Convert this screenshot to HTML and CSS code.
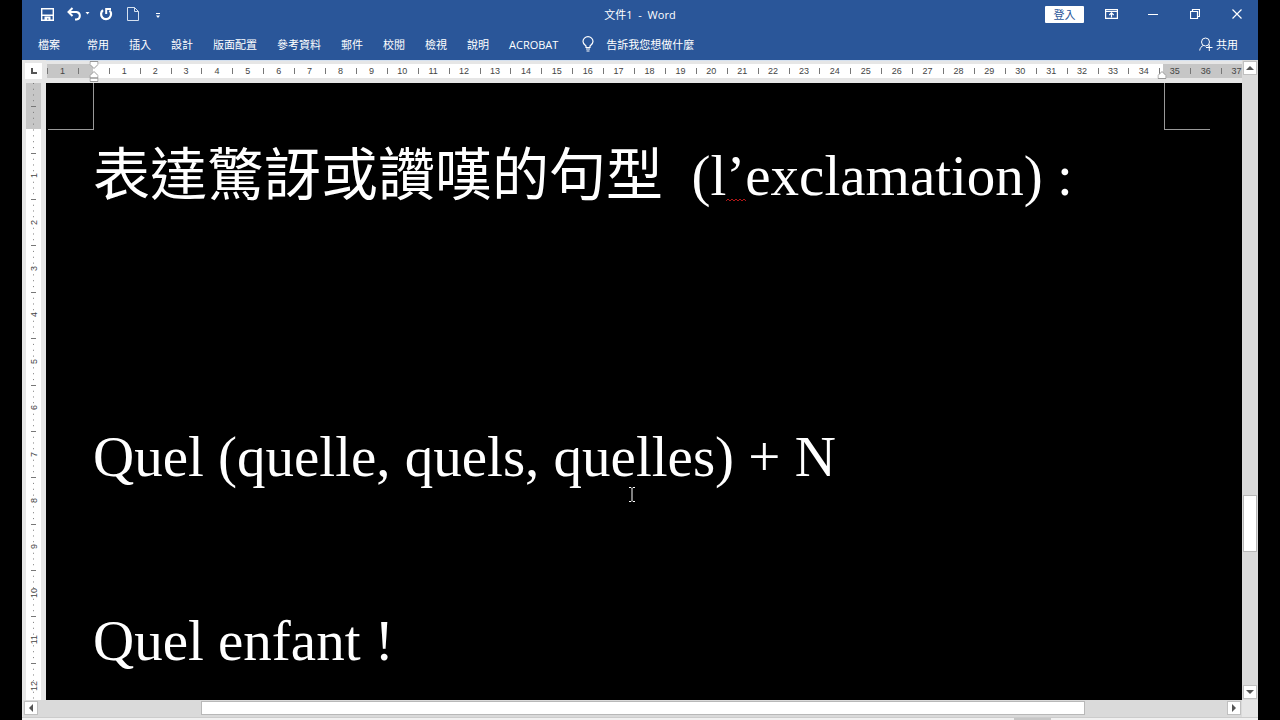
FILE: index.html
```html
<!DOCTYPE html>
<html lang="zh-Hant">
<head>
  <meta charset="UTF-8" />
  <meta name="viewport" content="width=device-width, initial-scale=1" />
  <title>文件1 - Word</title>
  <link rel="stylesheet" href="styles.css">
</head>
<body>
  <div class="app">
    <header class="titlebar">
      <div class="quick-access">
        <button aria-label="儲存">
          <svg width="13" height="13" viewBox="0 0 13 13"><path d="M.7.700h11.600v11.600H.700z" fill="none" stroke="currentColor" stroke-width="1.400"/><path d="M1 6.500h11V8H1zM3.500 8.500h6v4h-2v-2h-1.500v2H3.500z" fill="currentColor"/></svg>
        </button>
        <button class="undo" aria-label="復原">
          <svg width="24" height="14" viewBox="0 0 24 14"><path d="M2 5h7.500a4 3.800 0 0 1 0 7.500H8M5.500 1L1.500 5l4 4" fill="none" stroke="currentColor" stroke-width="2"/><path d="M18.500 5h4l-2 2.500z" fill="currentColor"/></svg>
        </button>
        <button class="redo" aria-label="重複">
          <svg width="14" height="14" viewBox="0 0 14 14"><path d="M4 3.200A5 5 0 1 0 10.500 3.500" fill="none" stroke="currentColor" stroke-width="2.200"/><path d="M7.200 7V2H12" fill="none" stroke="currentColor" stroke-width="2"/></svg>
        </button>
        <button class="new" aria-label="新增">
          <svg width="12" height="14" viewBox="0 0 12 14"><path d="M.5.500h7l4 4v9H.500zM7.500.500v4h4" fill="none" stroke="#d5e1f0"/></svg>
        </button>
        <button class="more" aria-label="自訂快速存取工具列">
          <svg width="6" height="6" viewBox="0 0 6 6"><path d="M1 .5h4" stroke="currentColor"/><path d="M1 2.500h4L3 5z" fill="currentColor"/></svg>
        </button>
      </div>
      <h1>文件1&nbsp; -&nbsp; Word</h1>
      <div class="window-buttons">
        <button class="sign-in">登入</button>
        <button aria-label="功能區顯示選項">
          <svg width="13" height="10" viewBox="0 0 13 10"><path d="M.6.600h11.800v8.800H.600zM.6 2.500h11.800" fill="none" stroke="currentColor" stroke-width="1.200"/><path d="M6.500 8.500V4M4.300 6l2.200-2.200L8.700 6" fill="none" stroke="currentColor" stroke-width="1.200"/></svg>
        </button>
        <button aria-label="最小化">
          <svg width="10" height="10" viewBox="0 0 10 10"><path d="M0 5.500h10" stroke="currentColor"/></svg>
        </button>
        <button aria-label="還原">
          <svg width="10" height="10" viewBox="0 0 10 10"><path d="M.5 2.500h7v7h-7zM2.500 2.500v-2h7v7h-2" fill="none" stroke="currentColor" stroke-width="1.200"/></svg>
        </button>
        <button aria-label="關閉">
          <svg width="10" height="10" viewBox="0 0 10 10"><path d="M.5.500l9 9M9.500.500l-9 9" stroke="currentColor" stroke-width="1.200"/></svg>
        </button>
      </div>
    </header>

    <nav class="tabs">
      <a class="file" href="#file">檔案</a>
      <a href="#home">常用</a>
      <a href="#insert">插入</a>
      <a href="#design">設計</a>
      <a href="#layout">版面配置</a>
      <a href="#references">參考資料</a>
      <a href="#mailings">郵件</a>
      <a href="#review">校閱</a>
      <a href="#view">檢視</a>
      <a href="#help">說明</a>
      <a class="acrobat" href="#acrobat">ACROBAT</a>
      <button class="tell-me">
        <svg width="12" height="16" viewBox="0 0 12 16"><path d="M4 11.500V10C2.500 8.500 1 7.500 1 5.500a5 4.800 0 0 1 10 0C11 7.500 9.500 8.500 8 10v1.500zM4 13h4M4.500 15h3" fill="none" stroke="currentColor" stroke-width="1.200"/></svg>
        告訴我您想做什麼
      </button>
      <button class="share">
        <svg width="14" height="14" viewBox="0 0 14 14"><circle cx="6.500" cy="5" r="4" fill="none" stroke="currentColor"/><path d="M.7 13.500C1 11 2.500 9 4.500 8.500M8.500 8.500l1 .8M7 10.500h6.500M10.300 7.500v6.500" fill="none" stroke="currentColor"/></svg>
        共用
      </button>
    </nav>

    <main class="workspace">
      <div class="tab-stop">
        <button aria-label="定位停駐點"><svg width="6" height="6" viewBox="0 0 6 6"><path d="M1 0v5h5" fill="none" stroke="currentColor" stroke-width="2"/></svg></button>
      </div>

      <div class="h-ruler">
        <div class="h-scale" id="hScale">
          <svg class="indent" width="9" height="21" viewBox="0 0 9 21"><path d="M.5.500h8v3l-4 4-4-4zM.5 17v-2.500l4-4 4 4V17zM.5 17h8v3.500h-8z" fill="#fff" stroke="#999"/></svg>
          <svg class="indent-right" width="9" height="8" viewBox="0 0 9 8"><path d="M.5 7.500v-3l4-4 4 4v3z" fill="#fff" stroke="#999"/></svg>
        </div>
      </div>

      <div class="v-ruler">
        <div class="v-scale" id="vScale"></div>
      </div>

      <article class="document">
        <div class="margins">
          <span class="corner"></span>
          <span class="corner corner-right"></span>
        </div>
        <div class="text">
          <p class="heading">表達驚訝或讚嘆的句型&nbsp; (l<span class="typo">’<svg class="squiggle" width="21" height="4" viewBox="0 0 21 4"><path d="M0 3l2-2 2 2 2-2 2 2 2-2 2 2 2-2 2 2 2-2 2 2" fill="none" stroke="#b01818"/></svg></span>exclamation) :</p>
          <p><br></p>
          <p><br></p>
          <p>Quel (quelle, quels, quelles) + N</p>
          <p><br></p>
          <p>Quel enfant !</p>
        </div>
        <svg class="cursor" width="7" height="15" viewBox="0 0 7 15"><path d="M.5.500h2l1 1 1-1h2M3.500 1.500v12M.5 14.500h2l1-1 1 1h2" fill="none" stroke="#fff"/></svg>
      </article>

      <div class="v-scroll">
        <button aria-label="向上捲動"><svg width="8" height="4" viewBox="0 0 8 4"><path d="M0 4l4-4 4 4z" fill="currentColor"/></svg></button>
        <div class="track">
          <span class="before"></span>
          <span class="thumb"></span>
          <span class="after"></span>
        </div>
        <button aria-label="向下捲動"><svg width="8" height="4" viewBox="0 0 8 4"><path d="M0 0l4 4 4-4z" fill="currentColor"/></svg></button>
      </div>

      <div class="h-scroll">
        <button aria-label="向左捲動"><svg width="4" height="8" viewBox="0 0 4 8"><path d="M4 0L0 4l4 4z" fill="currentColor"/></svg></button>
        <div class="track">
          <span class="before"></span>
          <span class="thumb"></span>
          <span class="after"></span>
        </div>
        <button aria-label="向右捲動"><svg width="4" height="8" viewBox="0 0 4 8"><path d="M0 0l4 4-4 4z" fill="currentColor"/></svg></button>
      </div>
    </main>

    <footer class="statusbar"><span class="active-view"></span></footer>
  </div>

  <script>
    // unlabeled: positions on the scale that get ticks but no number
    function buildScale(id, from, to, unlabeled) {
      const scale = document.getElementById(id);
      for (let n = from; n <= to; n++) {
        const cell = document.createElement('span');
        cell.className = 'unit';
        if (!unlabeled.includes(n)) {
          const label = document.createElement('b');
          label.textContent = Math.abs(n);
          cell.appendChild(label);
        }
        scale.appendChild(cell);
      }
    }

    buildScale('hScale', -1, 37, [0]);
    buildScale('vScale', -1, 12, [-1, 0]);
  </script>
</body>
</html>
```

FILE: styles.css
```css
* {
  box-sizing: border-box;
}
body {
  margin: 0;
  background: #000;
  color: #fff;
  font-family: "Open Sans", "Noto Sans CJK TC", sans-serif;
  font-size: 11px;
}
button {
  display: flex;
  align-items: center;
  justify-content: center;
  padding: 0;
  border: 0;
  background: none;
  color: inherit;
  font: inherit;
}
svg {
  display: block;
}
.app {
  display: flex;
  flex-direction: column;
  height: 100vh;
  margin: 0 22px;
  overflow: hidden;
}

/* Title bar */
.titlebar {
  display: grid;
  grid-template-columns: 1fr auto 1fr;
  align-items: center;
  height: 28px;
  background: #2a5699;
}
.quick-access {
  display: flex;
  align-items: center;
  padding-left: 19px;
}
.undo {
  margin-left: 13px;
}
.redo {
  margin-left: 8px;
}
.new {
  margin-left: 14px;
}
.more {
  margin-left: 16px;
  padding-top: 4px;
}
.titlebar h1 {
  margin: 0;
  font-size: 11px;
  font-weight: 400;
}
.window-buttons {
  display: flex;
  align-items: center;
  justify-content: flex-end;
}
.window-buttons button {
  width: 42px;
  height: 28px;
}
.window-buttons .sign-in {
  width: 39px;
  height: 17px;
  margin-right: 6px;
  border-radius: 1px;
  background: #fff;
  color: #2a5699;
}

/* Ribbon tabs */
.tabs {
  display: flex;
  align-items: center;
  gap: 20px;
  height: 32px;
  padding: 0 20px 0 16px;
  background: #2a5699;
}
.tabs a {
  color: #fff;
  text-decoration: none;
  white-space: nowrap;
}
.file {
  margin-right: 7px;
}
.acrobat {
  margin-right: 4px;
}
.tell-me {
  gap: 12px;
}
.share {
  gap: 3px;
  margin-left: auto;
}

/* Rulers and page */
.workspace {
  flex: 1;
  display: grid;
  grid-template-columns: 24px 1fr 16px;
  grid-template-rows: 23px 1fr 17px;
  min-height: 0;
  background: #e6e6e6;
}
.tab-stop {
  padding: 3px 0 0 3px;
}
.tab-stop button {
  width: 17px;
  height: 16px;
  background: #fff;
  color: #555;
}
.h-ruler {
  padding: 3px 0 5px 1px;
  overflow: hidden;
  border-top: 1px solid #d5e1f0;
}
.h-scale {
  position: relative;
  display: grid;
  grid-template-columns: repeat(39, 1fr);
  height: 14px;
  margin-right: -10px;
  background: linear-gradient(to right, #c6c6c6 3.8%, #fff 3.8%, #fff 92.6%, #c6c6c6 92.6%);
  color: #444;
  font-family: "Liberation Sans", sans-serif;
  font-size: 9px;
}
.h-scale .unit {
  display: flex;
  align-items: center;
  justify-content: center;
  background: linear-gradient(#777, #777) left center / 1px 6px no-repeat;
}
.unit b {
  font-weight: 400;
}
.indent,
.indent-right {
  position: absolute;
  transform: translateX(-50%);
}
.indent {
  left: 3.9%;
  top: -3px;
}
.indent-right {
  left: 92.5%;
  top: 7px;
}
.v-ruler {
  padding: 0 5px 0 4px;
  overflow: hidden;
}
.v-scale {
  display: grid;
  grid-template-rows: repeat(14, 1fr);
  height: calc(100% + 32px);
  margin-top: -23px;
  background: linear-gradient(#c6c6c6 10.7%, #fff 10.7%);
  color: #444;
  font-family: "Liberation Sans", sans-serif;
  font-size: 9px;
}
.v-scale .unit {
  display: flex;
  align-items: center;
  justify-content: center;
  background:
    linear-gradient(#777, #777) center top / 5px 1px no-repeat,
    linear-gradient(#777 1px, transparent 1px) center top / 1px 12.5% repeat-y;
}
.v-scale b {
  background: #fff;
  line-height: 12px;
  writing-mode: vertical-rl;
  transform: rotate(180deg);
}
.document {
  position: relative;
  overflow: hidden;
  background: #000;
  font-family: "Liberation Serif", "Noto Sans CJK TC", serif;
  font-size: 57px;
}
.margins {
  display: flex;
  justify-content: space-between;
  padding: 0 32px 0 2px;
}
.corner {
  width: 46px;
  height: 47px;
  border: solid #999;
  border-width: 0 1px 1px 0;
}
.corner-right {
  border-width: 0 0 1px 1px;
}
.text {
  padding-left: 47px;
  white-space: nowrap;
}
.text p {
  margin: 0;
  line-height: 92px;
}
.text .heading {
  margin-bottom: 5px;
}
.typo {
  position: relative;
}
.squiggle {
  position: absolute;
  left: 0;
  bottom: 5px;
}
.cursor {
  position: absolute;
  left: 49%;
  top: 404px;
  transform: translateX(-50%);
}

/* Scroll bars */
.v-scroll {
  grid-column: 3;
  grid-row: 1 / 3;
  display: flex;
  flex-direction: column;
  padding: 1px;
  background: #dadada;
}
.v-scroll button,
.h-scroll button {
  flex: none;
  width: 14px;
  height: 14px;
  border: 1px solid #c0c0c0;
  background: #fff;
  color: #555;
}
.track {
  flex: 1;
  display: flex;
}
.v-scroll .track {
  flex-direction: column;
}
.thumb {
  border: 1px solid #b8b8b8;
  background: #fff;
}
.v-scroll .before {
  flex: 420;
}
.v-scroll .thumb {
  flex: 55;
}
.v-scroll .after {
  flex: 133;
}
.h-scroll {
  grid-column: 1 / 3;
  grid-row: 3;
  display: flex;
  margin-left: 1px;
  padding: 1px 1px 2px;
  background: #dadada;
}
.h-scroll .before {
  flex: 163;
}
.h-scroll .thumb {
  flex: 883;
}
.h-scroll .after {
  flex: 142;
}
.statusbar {
  display: flex;
  justify-content: flex-end;
  height: 3px;
  padding-right: 207px;
  border-top: 1px solid #ccc;
  background: #f1f1f1;
}
.active-view {
  width: 37px;
  background: #c6c6c6;
}
```
